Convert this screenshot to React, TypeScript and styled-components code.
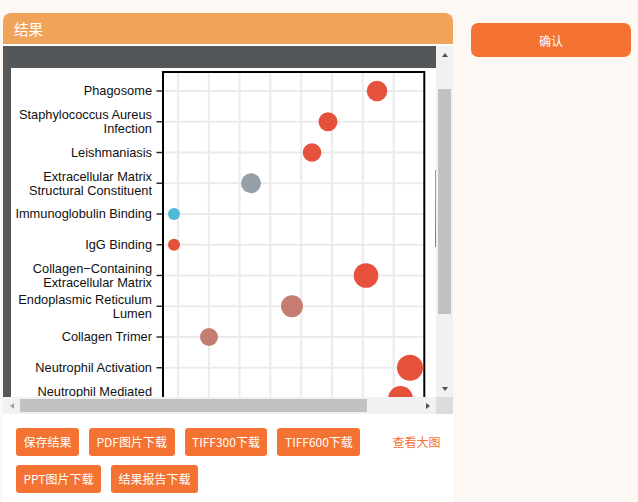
import styled, { createGlobalStyle, css } from 'styled-components';

const GlobalStyle = createGlobalStyle`
  html, body {
    margin: 0;
    padding: 0;
    background: #fef8f5;
  }
  body {
    font-family: 'Noto Sans CJK SC', 'Noto Sans', sans-serif;
  }
`;

const COLORS = {
  orange: '#f47232',
  header: '#f2a35a',
  red: '#e5513b',
  gray: '#979fa7',
  blue: '#4cb9d7',
  rose: '#c57d71',
};

const Page = styled.div`
  display: flex;
  align-items: flex-start;
  padding: 13px 0 0 3px;
  height: 502px;
  box-sizing: border-box;
  overflow: hidden;
`;

const ResultPanel = styled.section`
  width: 450px;
  height: 489px;
  display: flex;
  flex-direction: column;
  background: #fff;
  border-radius: 8px 8px 0 0;
`;

const PanelHeader = styled.div`
  height: 31px;
  line-height: 31px;
  padding-left: 11px;
  margin-bottom: 2px;
  background: ${COLORS.header};
  border-radius: 8px 8px 0 0;
  color: #fff;
  font-size: 14.5px;
`;

const ScrollBox = styled.div`
  display: grid;
  grid-template-columns: 433px 17px;
  grid-template-rows: 351px 17px;
`;

const Viewport = styled.div`
  box-sizing: border-box;
  overflow: hidden;
  padding: 22px 0 0 8px;
  background: #535759;

  svg {
    display: block;
    background: #fff;
  }
`;

const VBar = styled.div`
  display: flex;
  flex-direction: column;
  background: #f1f1f1;
`;

const HBar = styled.div`
  display: flex;
  background: #f1f1f1;
`;

const Corner = styled.div`
  background: #dcdcdc;
`;

type Dir = 'up' | 'down' | 'left' | 'right';

const arrows: Record<Dir, ReturnType<typeof css>> = {
  up: css`
    border-width: 0 3.5px 4px;
    border-bottom-color: var(--arrow);
  `,
  down: css`
    border-width: 4px 3.5px 0;
    border-top-color: var(--arrow);
  `,
  left: css`
    border-width: 3.5px 4px 3.5px 0;
    border-right-color: var(--arrow);
  `,
  right: css`
    border-width: 3.5px 0 3.5px 4px;
    border-left-color: var(--arrow);
  `,
};

const ArrowButton = styled.div<{ $dir: Dir; $disabled?: boolean }>`
  --arrow: ${({ $disabled }) => ($disabled ? '#a3a3a3' : '#505050')};
  flex: none;
  width: 17px;
  height: 17px;
  display: flex;
  align-items: center;
  justify-content: center;

  &::before {
    content: '';
    width: 0;
    height: 0;
    border-style: solid;
    border-color: transparent;
    ${({ $dir }) => arrows[$dir]};
  }
`;

const VTrack = styled.div`
  flex: 1;
  display: flex;
  flex-direction: column;
`;

const HTrack = styled.div`
  flex: 1;
  display: flex;
  align-items: center;
`;

const VThumb = styled.div<{ $offset: number; $size: number }>`
  margin: ${({ $offset }) => $offset}px 2px 0;
  height: ${({ $size }) => $size}px;
  background: #c1c1c1;
`;

const HThumb = styled.div<{ $offset: number; $size: number }>`
  margin-left: ${({ $offset }) => $offset}px;
  width: ${({ $size }) => $size}px;
  height: 13px;
  background: #c1c1c1;
`;

const Actions = styled.div`
  flex: 1;
  display: flex;
  flex-direction: column;
  gap: 9px;
  padding: 14px 13px 0;
`;

const ActionRow = styled.div`
  display: flex;
  align-items: center;
  gap: 10px;
`;

const ActionButton = styled.button`
  height: 28px;
  padding: 0 7.5px;
  border: none;
  border-radius: 3px;
  background: ${COLORS.orange};
  color: #fff;
  font-family: 'Noto Sans CJK SC', sans-serif;
  font-size: 12px;
  line-height: 28px;
  white-space: nowrap;
  cursor: pointer;
`;

const ViewLink = styled.a`
  margin-left: 22px;
  color: ${COLORS.orange};
  font-size: 12px;
  line-height: 28px;
  white-space: nowrap;
  cursor: pointer;
`;

const ConfirmButton = styled.button`
  width: 160px;
  height: 34px;
  margin: 10px 0 0 18px;
  border: none;
  border-radius: 7px;
  background: ${COLORS.orange};
  color: #fff;
  font-family: 'Noto Sans CJK SC', sans-serif;
  font-size: 12px;
  cursor: pointer;
`;

type Term = { label: string[]; x: number; r: number; color: string };

const terms: Term[] = [
  { label: ['Phagosome'], x: 366, r: 10.3, color: COLORS.red },
  { label: ['Staphylococcus Aureus', 'Infection'], x: 317, r: 9.5, color: COLORS.red },
  { label: ['Leishmaniasis'], x: 301, r: 9.3, color: COLORS.red },
  { label: ['Extracellular Matrix', 'Structural Constituent'], x: 240, r: 10, color: COLORS.gray },
  { label: ['Immunoglobulin Binding'], x: 163, r: 6, color: COLORS.blue },
  { label: ['IgG Binding'], x: 163, r: 6, color: COLORS.red },
  { label: ['Collagen\u2212Containing', 'Extracellular Matrix'], x: 355, r: 12.3, color: COLORS.red },
  { label: ['Endoplasmic Reticulum', 'Lumen'], x: 281, r: 11, color: COLORS.rose },
  { label: ['Collagen Trimer'], x: 198, r: 9, color: COLORS.rose },
  { label: ['Neutrophil Activation'], x: 399, r: 13, color: COLORS.red },
  { label: ['Neutrophil Mediated', 'Immunity'], x: 389.5, r: 12.5, color: COLORS.red },
  { label: ['Neutrophil Degranulation'], x: 395, r: 12.5, color: COLORS.red },
];

const ROW0 = 23;
const ROW_STEP = 30.75;
const FRAME_L = 152;
const FRAME_R = 413.3;
const FRAME_T = 4;
const LABEL_X = 141;
const vLines = Array.from({ length: 8 }, (_, i) => 167 + i * 30.8);

function DotPlot() {
  const bottom = ROW0 + terms.length * ROW_STEP;
  return (
    <svg width={490} height={480} viewBox="0 0 490 480">
      <defs>
        <linearGradient id="cbar" x1="0" y1="0" x2="0" y2="1">
          <stop offset="0" stopColor={COLORS.blue} />
          <stop offset="0.35" stopColor={COLORS.gray} />
          <stop offset="0.55" stopColor={COLORS.rose} />
          <stop offset="1" stopColor={COLORS.red} />
        </linearGradient>
      </defs>
      {terms.map((_, i) => (
        <line
          key={`h${i}`}
          x1={FRAME_L}
          x2={FRAME_R}
          y1={ROW0 + i * ROW_STEP}
          y2={ROW0 + i * ROW_STEP}
          stroke="#ebebeb"
          strokeWidth={2}
        />
      ))}
      {vLines.map((x) => (
        <line key={`v${x}`} x1={x} x2={x} y1={FRAME_T} y2={bottom} stroke="#ebebeb" strokeWidth={2} />
      ))}
      {terms.map((t, i) => {
        const y = ROW0 + i * ROW_STEP;
        return (
          <g key={t.label.join(' ')}>
            <circle cx={t.x} cy={y} r={t.r} fill={t.color} />
            <line x1={145.5} x2={FRAME_L} y1={y} y2={y} stroke="#222" strokeWidth={1.4} />
            <text
              x={LABEL_X}
              textAnchor="end"
              fontFamily="'Liberation Sans', Arial, sans-serif"
              fontSize={12.8}
              fill="#111"
            >
              {t.label.length === 1 ? (
                <tspan x={LABEL_X} y={y + 4}>
                  {t.label[0]}
                </tspan>
              ) : (
                <>
                  <tspan x={LABEL_X} y={y - 2.5}>
                    {t.label[0]}
                  </tspan>
                  <tspan x={LABEL_X} y={y + 11.5}>
                    {t.label[1]}
                  </tspan>
                </>
              )}
            </text>
          </g>
        );
      })}
      <rect
        x={FRAME_L}
        y={FRAME_T}
        width={FRAME_R - FRAME_L}
        height={bottom}
        fill="none"
        stroke="#000"
        strokeWidth={2}
      />
      <rect x={424} y={102} width={14} height={77} fill="url(#cbar)" />
    </svg>
  );
}

export default function App() {
  return (
    <>
      <GlobalStyle />
      <Page>
        <ResultPanel>
          <PanelHeader>结果</PanelHeader>
          <ScrollBox>
            <Viewport>
              <DotPlot />
            </Viewport>
            <VBar>
              <ArrowButton $dir="up" />
              <VTrack>
                <VThumb $offset={26} $size={225} />
              </VTrack>
              <ArrowButton $dir="down" />
            </VBar>
            <HBar>
              <ArrowButton $dir="left" $disabled />
              <HTrack>
                <HThumb $offset={0} $size={347} />
              </HTrack>
              <ArrowButton $dir="right" />
            </HBar>
            <Corner />
          </ScrollBox>
          <Actions>
            <ActionRow>
              <ActionButton>保存结果</ActionButton>
              <ActionButton>PDF图片下载</ActionButton>
              <ActionButton>TIFF300下载</ActionButton>
              <ActionButton>TIFF600下载</ActionButton>
              <ViewLink>查看大图</ViewLink>
            </ActionRow>
            <ActionRow>
              <ActionButton>PPT图片下载</ActionButton>
              <ActionButton>结果报告下载</ActionButton>
            </ActionRow>
          </Actions>
        </ResultPanel>
        <ConfirmButton>确认</ConfirmButton>
      </Page>
    </>
  );
}
